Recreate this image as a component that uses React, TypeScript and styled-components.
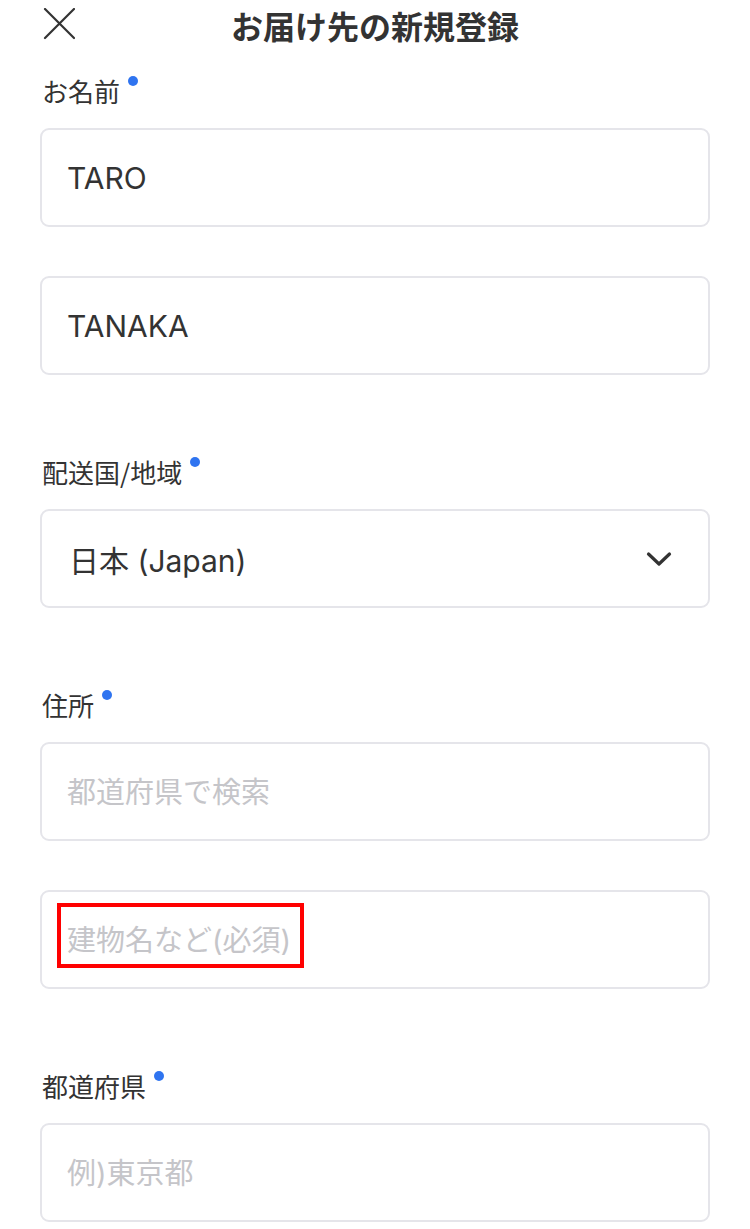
import React from 'react';
import styled, { createGlobalStyle } from 'styled-components';

const GlobalStyle = createGlobalStyle`
  body {
    margin: 0;
    background: #ffffff;
    font-family: Inter, "Noto Sans CJK JP", sans-serif;
    color: #333333;
  }
`;

const App = () => {
  return (
    <>
      <GlobalStyle />
      <Page>
        <Header>
          <CloseButton aria-label="閉じる">
            <svg width="32" height="32" viewBox="0 0 32 32">
              <path d="M2 1 L31 30 M31 1 L2 30" stroke="#333" strokeWidth="2.2" strokeLinecap="round" fill="none" />
            </svg>
          </CloseButton>
          <Title>お届け先の新規登録</Title>
        </Header>

        <Form>
          <Section>
            <Label>お名前</Label>
            <Fields>
              <Field defaultValue="TARO" />
              <Field defaultValue="TANAKA" />
            </Fields>
          </Section>

          <Section>
            <Label>配送国/地域</Label>
            <Select>
              <span>日本 (Japan)</span>
              <svg width="26" height="16" viewBox="0 0 26 16">
                <path d="M2.5 3 L13 13 L23.5 3" stroke="#333" strokeWidth="3.2" strokeLinecap="round" strokeLinejoin="round" fill="none" />
              </svg>
            </Select>
          </Section>

          <Section>
            <Label>住所</Label>
            <Fields>
              <Field placeholder="都道府県で検索" />
              <FieldWrap>
                <Field placeholder="建物名など(必須)" />
                <Highlight />
              </FieldWrap>
            </Fields>
          </Section>

          <Section>
            <Label>都道府県</Label>
            <Field placeholder="例)東京都" />
          </Section>
        </Form>
      </Page>
    </>
  );
};

const Page = styled.div`
  width: 750px;
  min-height: 1229px;
  background: #fff;
`;

const Header = styled.header`
  position: relative;
  height: 52px;
  display: flex;
  align-items: center;
  justify-content: center;
`;

const CloseButton = styled.button`
  position: absolute;
  left: 43px;
  top: 8px;
  width: 32px;
  height: 32px;
  padding: 0;
  border: none;
  background: none;
  display: flex;
`;

const Title = styled.h1`
  margin: 0;
  margin-top: -2px;
  font-family: "Noto Sans CJK JP", sans-serif;
  font-size: 32px;
  font-weight: 700;
  line-height: 52px;
  color: #333;
`;

const Form = styled.div`
  padding: 24px 40px 0;
  display: flex;
  flex-direction: column;
  gap: 82px;
`;

const Section = styled.div`
  display: flex;
  flex-direction: column;
  gap: 22px;
`;

const Label = styled.div`
  position: relative;
  align-self: flex-start;
  margin-left: 2px;
  font-family: "Noto Sans CJK JP", sans-serif;
  font-size: 26px;
  line-height: 30px;
  color: #333;

  &::after {
    content: "";
    position: absolute;
    right: -18px;
    top: 0px;
    width: 10px;
    height: 10px;
    border-radius: 50%;
    background: #2f74f0;
  }
`;

const Fields = styled.div`
  display: flex;
  flex-direction: column;
  gap: 49px;
`;

const FieldWrap = styled.div`
  position: relative;
`;

const Field = styled.input`
  box-sizing: border-box;
  width: 100%;
  height: 99px;
  padding: 0 24px 0 25px;
  border: 2px solid #e5e5ea;
  border-radius: 9px;
  background: #fff;
  font-family: Inter, "Noto Sans CJK JP", sans-serif;
  font-size: 30px;
  color: #333;
  outline: none;

  &::placeholder {
    color: #c5c5c9;
    font-size: 29px;
  }
`;

const Select = styled.div`
  box-sizing: border-box;
  height: 99px;
  padding: 0 36px 0 27px;
  border: 2px solid #e5e5ea;
  border-radius: 9px;
  display: flex;
  align-items: center;
  justify-content: space-between;
  font-size: 30px;
  color: #333;
`;

const Highlight = styled.div`
  position: absolute;
  left: 17px;
  top: 13px;
  width: 247px;
  height: 65px;
  box-sizing: border-box;
  border: 4.5px solid #ff0000;
  pointer-events: none;
`;

export default App;
